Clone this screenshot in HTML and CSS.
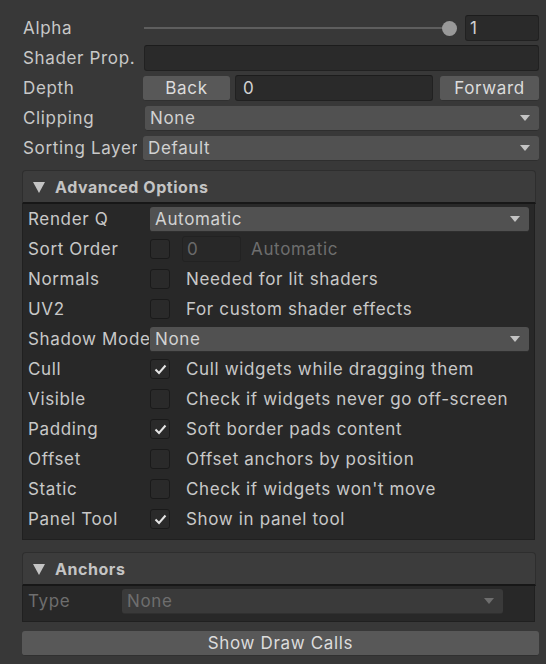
FILE: index.html
```html
<!DOCTYPE html>
<html>
<head>
<meta charset="utf-8">
<link rel="stylesheet" href="styles.css">
</head>
<body>
<div class="inspector">
  <div class="top">
    <div class="row">
      <div class="lbl">Alpha</div>
      <div class="slider"><div class="track"></div><div class="thumb"></div></div>
      <div class="field num">1</div>
    </div>
    <div class="row">
      <div class="lbl">Shader Prop.</div>
      <div class="field grow"></div>
    </div>
    <div class="row">
      <div class="lbl">Depth</div>
      <div class="btn back">Back</div>
      <div class="field grow depth">0</div>
      <div class="btn fwd">Forward</div>
    </div>
    <div class="row">
      <div class="lbl">Clipping</div>
      <div class="dropdown grow clip"><span>None</span><svg class="arrow" width="10" height="6" viewBox="0 0 10 6"><polygon points="0,0 10,0 5,6"/></svg></div>
    </div>
    <div class="row">
      <div class="lbl">Sorting Layer</div>
      <div class="dropdown grow"><span>Default</span><svg class="arrow" width="10" height="6" viewBox="0 0 10 6"><polygon points="0,0 10,0 5,6"/></svg></div>
    </div>
  </div>

  <div class="section adv">
    <div class="head"><svg class="tri" width="12" height="11" viewBox="0 0 12 11"><polygon points="0,0 12,0 6,11"/></svg><span>Advanced Options</span></div>
    <div class="box">
      <div class="row">
        <div class="lbl">Render Q</div>
        <div class="dropdown grow"><span>Automatic</span><svg class="arrow" width="10" height="6" viewBox="0 0 10 6"><polygon points="0,0 10,0 5,6"/></svg></div>
      </div>
      <div class="row">
        <div class="lbl">Sort Order</div>
        <div class="check"></div>
        <div class="field dimfield">0</div>
        <div class="dim note">Automatic</div>
      </div>
      <div class="row">
        <div class="lbl">Normals</div>
        <div class="check"></div>
        <div class="desc">Needed for lit shaders</div>
      </div>
      <div class="row">
        <div class="lbl">UV2</div>
        <div class="check"></div>
        <div class="desc">For custom shader effects</div>
      </div>
      <div class="row">
        <div class="lbl">Shadow Mode</div>
        <div class="dropdown grow"><span>None</span><svg class="arrow" width="10" height="6" viewBox="0 0 10 6"><polygon points="0,0 10,0 5,6"/></svg></div>
      </div>
      <div class="row">
        <div class="lbl">Cull</div>
        <div class="check"><svg width="19" height="19" viewBox="0 0 19 19"><polyline points="4.5,9.5 8,13 14.5,5.5"/></svg></div>
        <div class="desc">Cull widgets while dragging them</div>
      </div>
      <div class="row">
        <div class="lbl">Visible</div>
        <div class="check"></div>
        <div class="desc">Check if widgets never go off-screen</div>
      </div>
      <div class="row">
        <div class="lbl">Padding</div>
        <div class="check"><svg width="19" height="19" viewBox="0 0 19 19"><polyline points="4.5,9.5 8,13 14.5,5.5"/></svg></div>
        <div class="desc">Soft border pads content</div>
      </div>
      <div class="row">
        <div class="lbl">Offset</div>
        <div class="check"></div>
        <div class="desc">Offset anchors by position</div>
      </div>
      <div class="row">
        <div class="lbl">Static</div>
        <div class="check"></div>
        <div class="desc">Check if widgets won't move</div>
      </div>
      <div class="row">
        <div class="lbl">Panel Tool</div>
        <div class="check"><svg width="19" height="19" viewBox="0 0 19 19"><polyline points="4.5,9.5 8,13 14.5,5.5"/></svg></div>
        <div class="desc">Show in panel tool</div>
      </div>
    </div>
  </div>

  <div class="section anchors">
    <div class="head"><svg class="tri" width="12" height="11" viewBox="0 0 12 11"><polygon points="0,0 12,0 6,11"/></svg><span>Anchors</span></div>
    <div class="box">
      <div class="row">
        <div class="lbl dim">Type</div>
        <div class="dropdown grow disabled"><span>None</span><svg class="arrow" width="10" height="6" viewBox="0 0 10 6"><polygon points="0,0 10,0 5,6"/></svg></div>
      </div>
    </div>
  </div>

  <div class="btn wide">Show Draw Calls</div>
</div>
</body>
</html>
```

FILE: styles.css
```css
* { box-sizing: border-box; }
html, body { margin: 0; padding: 0; }
body {
  background: #383838;
  color: #c8c8c8;
  font-family: Inter, "Noto Sans", "Liberation Sans", sans-serif;
  font-size: 17px;
  letter-spacing: 0.65px;
  width: 546px;
  height: 664px;
  overflow: hidden;
}
.inspector {
  padding: 13px 7px 0 22px;
}
.row {
  display: flex;
  align-items: center;
  height: 30px;
}
.lbl {
  white-space: nowrap;
  overflow: hidden;
  flex: none;
}
.top .lbl { width: 115px; margin-right: 6px; padding-left: 1px; }
.grow { flex: 1; min-width: 0; }

.slider {
  flex: 1;
  display: flex;
  align-items: center;
  height: 26px;
  margin-left: 1px;
  margin-right: 8px;
}
.track {
  flex: 1;
  height: 2px;
  background: #5e5e5e;
}
.thumb {
  width: 15px;
  height: 15px;
  border-radius: 50%;
  background: #999999;
  margin-left: -4px;
  flex: none;
}
.field {
  height: 26px;
  background: #2a2a2a;
  border: 1px solid #212121;
  border-top-color: #1c1c1c;
  border-radius: 3px;
  color: #d2d2d2;
  padding: 0 6px;
  line-height: 24px;
  white-space: nowrap;
}
.field.num { width: 74px; flex: none; padding-left: 4px; }
.top .row:nth-child(2) .field { margin-left: 1px; }
.field.depth { margin: 0 7px 0 5px; padding-left: 7px; }

.btn {
  height: 25px;
  background: #585858;
  border-radius: 3px;
  color: #dcdcdc;
  text-align: center;
  line-height: 25px;
  flex: none;
  border-bottom: 1px solid #303030;
}
.btn.back { width: 87px; }
.btn.fwd { width: 99px; }

.dropdown {
  height: 25px;
  background: #515151;
  border-radius: 3px;
  border-bottom: 1px solid #2e2e2e;
  display: flex;
  align-items: center;
  justify-content: space-between;
  padding: 0 9px 0 5px;
  color: #d2d2d2;
}
.dropdown.clip { margin-left: 2px; }
.arrow { fill: #c4c4c4; flex: none; }

.section { margin-top: 7px; margin-right: 3px; }
.head {
  height: 34px;
  background: #3c3c3c;
  border: 1px solid #2e2e2e;
  border-bottom: 2px solid #171717;
  border-radius: 4px 4px 0 0;
  display: flex;
  align-items: center;
  padding-left: 10px;
  font-weight: 700;
  font-size: 16px;
  letter-spacing: 0.55px;
  color: #c4c4c4;
}
.tri { fill: #c4c4c4; margin-right: 10px; margin-top: 1px; }
.box {
  background: #282828;
  border: 1px solid #202020;
  border-top: none;
  margin-right: 1px;
  padding: 0 5px 5px 5px;
}
.adv .box .lbl { width: 121px; margin-right: 1px; }
.check {
  width: 20px;
  height: 20px;
  border: 1px solid #1a1a1a;
  background: #2a2a2a;
  border-radius: 3px;
  flex: none;
  margin-right: 16px;
  position: relative;
}
.check svg {
  display: block;
  fill: none;
  stroke: #e4e4e4;
  stroke-width: 2;
}
.desc { white-space: nowrap; }
.dimfield {
  width: 59px;
  flex: none;
  margin-left: -4px;
  color: #6a6a6a;
  background: #282828;
  border-color: #222222;
  padding-left: 4px;
}
.dim { color: #6e6e6e; }
.note { margin-left: 10px; }

.anchors { margin-top: 12px; }
.anchors .box { padding: 2px 5px 7px 5px; }
.anchors .row { height: 26px; }
.anchors .box .lbl { width: 94px; }
.dropdown.disabled {
  background: #3a3a3a;
  color: #6e6e6e;
  border-bottom-color: #303030;
  margin-right: 26px;
}
.dropdown.disabled .arrow { fill: #6e6e6e; }

.btn.wide {
  width: 517px;
  margin-top: 9px;
}
```
